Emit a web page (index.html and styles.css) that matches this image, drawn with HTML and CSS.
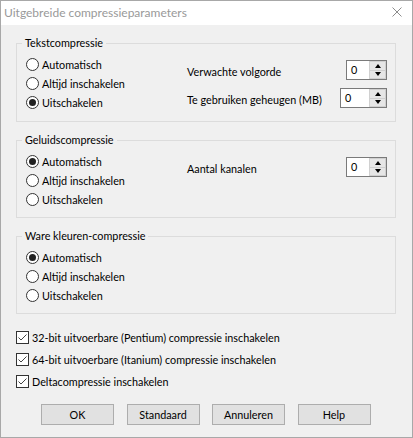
FILE: index.html
```
<!DOCTYPE html>
<html lang="nl">
<head>
<meta charset="utf-8">
<title>Uitgebreide compressieparameters</title>
<link rel="stylesheet" href="styles.css">
</head>
<body>
<div class="window">
  <div class="titlebar">
    <span class="title">Uitgebreide compressieparameters</span>
    <svg class="close" width="10" height="10" viewBox="0 0 10 10"><path d="M0.5 0.5 L9.5 9.5 M9.5 0.5 L0.5 9.5" stroke="#8c8c8c" stroke-width="1" fill="none"/></svg>
  </div>
  <div class="client">
    <div class="group g1">
      <div class="legend">Tekstcompressie</div>
      <div class="group-body">
        <div class="radios">
          <div class="radio"><span class="circle"></span>Automatisch</div>
          <div class="radio"><span class="circle"></span>Altijd inschakelen</div>
          <div class="radio"><span class="circle checked"></span>Uitschakelen</div>
        </div>
        <div class="fields">
          <span class="flabel">Verwachte volgorde</span>
          <div class="spin w41"><span class="val">0</span><span class="btns"><span class="up"></span><span class="down"></span></span></div>
          <span class="flabel">Te gebruiken geheugen (MB)</span>
          <div class="spin w47"><span class="val">0</span><span class="btns"><span class="up"></span><span class="down"></span></span></div>
        </div>
      </div>
    </div>

    <div class="group">
      <div class="legend">Geluidscompressie</div>
      <div class="group-body">
        <div class="radios">
          <div class="radio"><span class="circle checked"></span>Automatisch</div>
          <div class="radio"><span class="circle"></span>Altijd inschakelen</div>
          <div class="radio"><span class="circle"></span>Uitschakelen</div>
        </div>
        <div class="fields">
          <span class="flabel">Aantal kanalen</span>
          <div class="spin w41"><span class="val">0</span><span class="btns"><span class="up"></span><span class="down"></span></span></div>
        </div>
      </div>
    </div>

    <div class="group">
      <div class="legend">Ware kleuren-compressie</div>
      <div class="group-body">
        <div class="radios">
          <div class="radio"><span class="circle checked"></span>Automatisch</div>
          <div class="radio"><span class="circle"></span>Altijd inschakelen</div>
          <div class="radio"><span class="circle"></span>Uitschakelen</div>
        </div>
      </div>
    </div>

    <div class="checks">
      <div class="check"><span class="box"><svg width="11" height="11" viewBox="0 0 11 11"><path d="M1.5 5.5 L4 8 L9.5 2.5" stroke="#444" stroke-width="1" fill="none"/></svg></span>32-bit uitvoerbare (Pentium) compressie inschakelen</div>
      <div class="check"><span class="box"><svg width="11" height="11" viewBox="0 0 11 11"><path d="M1.5 5.5 L4 8 L9.5 2.5" stroke="#444" stroke-width="1" fill="none"/></svg></span>64-bit uitvoerbare (Itanium) compressie inschakelen</div>
      <div class="check"><span class="box"><svg width="11" height="11" viewBox="0 0 11 11"><path d="M1.5 5.5 L4 8 L9.5 2.5" stroke="#444" stroke-width="1" fill="none"/></svg></span>Deltacompressie inschakelen</div>
    </div>

    <div class="buttons">
      <button class="btn">OK</button>
      <button class="btn">Standaard</button>
      <button class="btn">Annuleren</button>
      <button class="btn">Help</button>
    </div>
  </div>
</div>
</body>
</html>
```
FILE: styles.css
```
* { box-sizing: border-box; }
html, body { margin: 0; padding: 0; background: #f0f0f0; }
body {
  font-family: "Lato", "Liberation Sans", sans-serif;
  font-size: 10.8px;
  color: #000;
}
.window {
  width: 413px;
  height: 438px;
  border: 1px solid #a8a8a8;
  display: flex;
  flex-direction: column;
  background: #f0f0f0;
}
.titlebar {
  height: 24px;
  background: #fff;
  display: flex;
  align-items: center;
  justify-content: space-between;
  padding: 0 10px 0 3px;
  flex: none;
}
.title {
  font-size: 12px;
  color: #999;
  line-height: 24px;
}
.close { display: block; margin-top: -2px; }

.client {
  flex: 1;
  padding: 18px 16px 0 15px;
  display: flex;
  flex-direction: column;
}
.group {
  border: 1px solid #dcdcdc;
  height: 78px;
  margin-bottom: 18px;
}
.group.g1 { height: 79px; }
.legend {
  margin: -8px 0 0 5px;
  padding: 0 3px;
  line-height: 14px;
  background: #f0f0f0;
  width: fit-content;
}
.group-body { display: flex; }
.radios {
  width: 170px;
  padding: 5px 0 0 9px;
  flex: none;
}
.radio {
  height: 19px;
  display: flex;
  align-items: center;
}
.circle {
  width: 13px;
  height: 13px;
  border: 1px solid #333;
  border-radius: 50%;
  background: #fff;
  margin-right: 3px;
  flex: none;
  display: flex;
  align-items: center;
  justify-content: center;
}
.circle.checked::after {
  content: "";
  width: 7px;
  height: 7px;
  border-radius: 50%;
  background: #222;
}
.fields {
  flex: 1;
  padding: 10px 8px 0 0;
  display: grid;
  grid-template-columns: 1fr auto;
  grid-auto-rows: 20px;
  row-gap: 8px;
  align-items: center;
}
.flabel { padding-top: 2px; }
.spin {
  height: 20px;
  border: 1px solid #7a7a7a;
  background: #fff;
  display: flex;
  justify-self: end;
}
.spin.w41 { width: 41px; }
.spin.w47 { width: 47px; }
.val { flex: 1; padding-left: 4px; line-height: 18px; }
.btns {
  width: 17px;
  display: flex;
  flex-direction: column;
  flex: none;
}
.up, .down {
  flex: 1;
  background: #e6e6e6;
  border: 1px solid #d0d0d0;
  display: flex;
  align-items: center;
  justify-content: center;
}
.up { border-bottom-width: 0; }
.up::after {
  content: "";
  border-left: 3.5px solid transparent;
  border-right: 3.5px solid transparent;
  border-bottom: 4px solid #000;
}
.down::after {
  content: "";
  border-left: 3.5px solid transparent;
  border-right: 3.5px solid transparent;
  border-top: 4px solid #000;
}
.checks {
  margin-top: -6px;
}
.check {
  height: 22px;
  display: flex;
  align-items: center;
  white-space: nowrap;
}
.box {
  width: 13px;
  height: 13px;
  border: 1px solid #333;
  background: #fff;
  margin-right: 3px;
  flex: none;
  display: flex;
}
.box svg { display: block; }
.buttons {
  margin-top: 12px;
  padding-left: 25px;
  display: flex;
  column-gap: 12.5px;
}
.btn {
  width: 73px;
  height: 21px;
  background: #e1e1e1;
  border: 1px solid #adadad;
  font: inherit;
  color: #000;
  padding: 0;
  border-radius: 0;
}
```
